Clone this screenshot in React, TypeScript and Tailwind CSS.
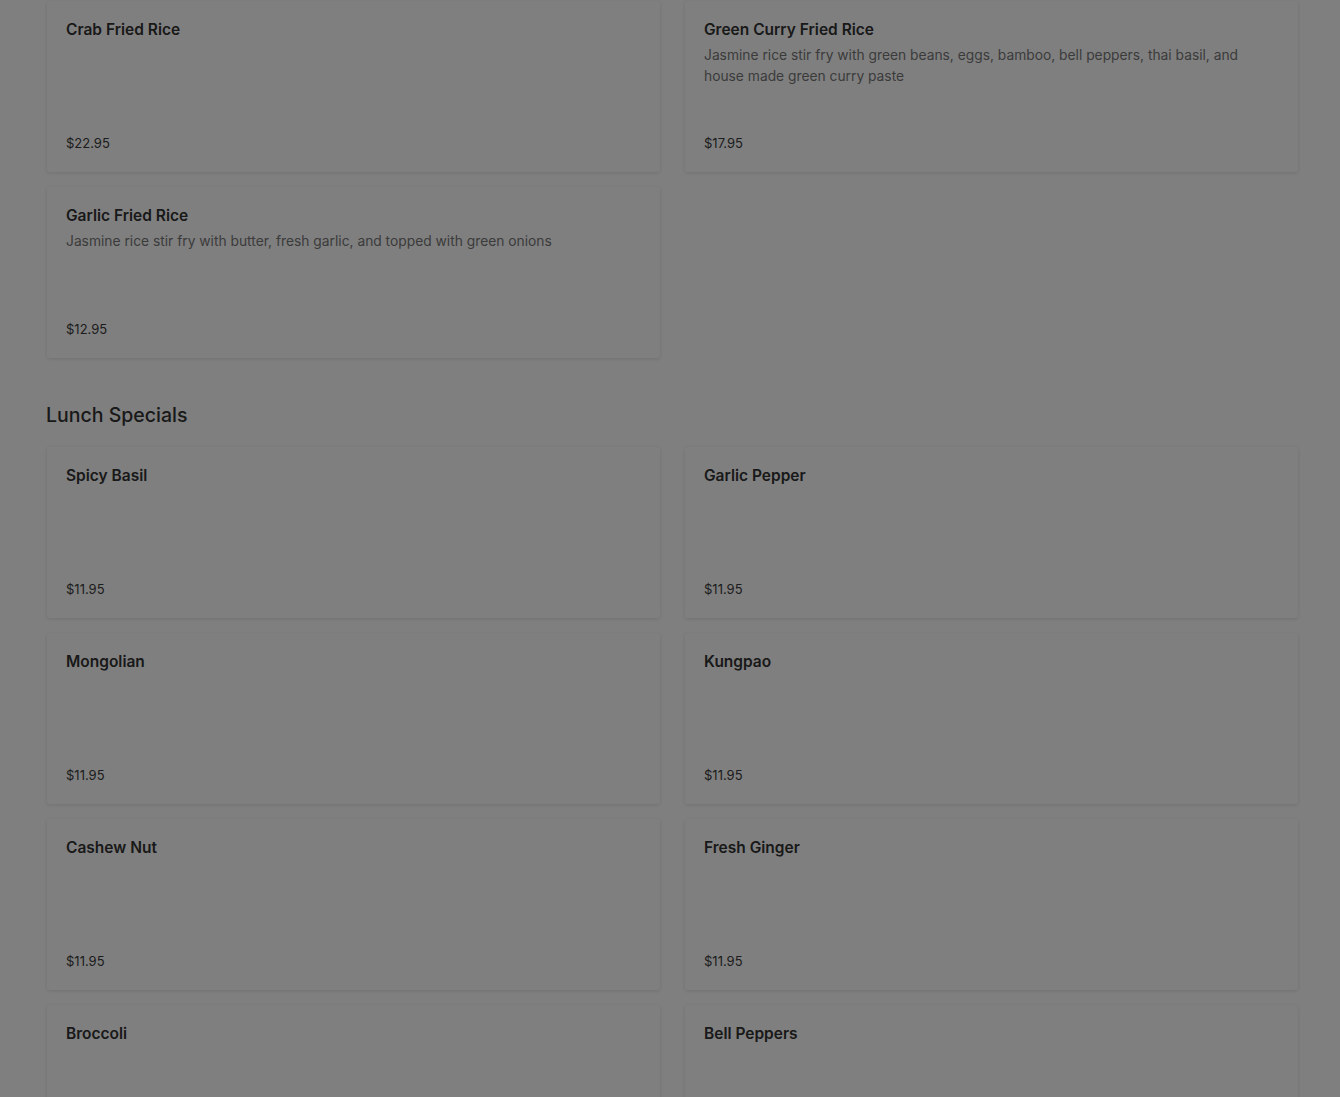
type Item = {
  name: string
  description?: string
  price: string
}

const friedRice: Item[] = [
  { name: 'Crab Fried Rice', price: '$22.95' },
  {
    name: 'Green Curry Fried Rice',
    description: 'Jasmine rice stir fry with green beans, eggs, bamboo, bell peppers, thai basil, and house made green curry paste',
    price: '$17.95',
  },
  {
    name: 'Garlic Fried Rice',
    description: 'Jasmine rice stir fry with butter, fresh garlic, and topped with green onions',
    price: '$12.95',
  },
]

const lunchSpecials: Item[] = [
  { name: 'Spicy Basil', price: '$11.95' },
  { name: 'Garlic Pepper', price: '$11.95' },
  { name: 'Mongolian', price: '$11.95' },
  { name: 'Kungpao', price: '$11.95' },
  { name: 'Cashew Nut', price: '$11.95' },
  { name: 'Fresh Ginger', price: '$11.95' },
  { name: 'Broccoli', price: '$11.95' },
  { name: 'Bell Peppers', price: '$11.95' },
]

function MenuCard({ name, description, price }: Item) {
  return <div className="h-[171px] flex flex-col justify-between bg-white rounded-[3px] shadow-[0_1px_4px_rgba(0,0,0,0.12)] px-[19px] pt-[17px] pb-[20px]">
    <div>
      <div className="text-[15.5px] leading-6 font-semibold text-[#333]">{name}</div>
      {description && <div className="mt-[3px] text-[13.8px] leading-[21px] text-[#777] pr-[20px]">
        {description}
      </div>}
    </div>
    <div className="text-[13px] leading-[18px] text-[#3a3a3a]">{price}</div>
  </div>
}

function Grid({ items }: { items: Item[] }) {
  return <div className="grid grid-cols-2 gap-x-[25px] gap-y-[15px]">
    {items.map((item) => <MenuCard key={item.name} {...item} />)}
  </div>
}

export default function App() {
  return <div className="relative h-screen bg-white overflow-hidden" style={{ fontFamily: 'Inter, "Noto Sans", sans-serif' }}>
    <div className="w-[1251px] ml-[47px] pt-px">
      <Grid items={friedRice} />
      <h2 className="mt-[41px] mb-[16px] -ml-px text-[19.5px] leading-8 font-medium text-[#333]">
        Lunch Specials
      </h2>
      <Grid items={lunchSpecials} />
    </div>
    {/* modal backdrop */}
    <div className="fixed inset-0 bg-black/50" />
  </div>
}
